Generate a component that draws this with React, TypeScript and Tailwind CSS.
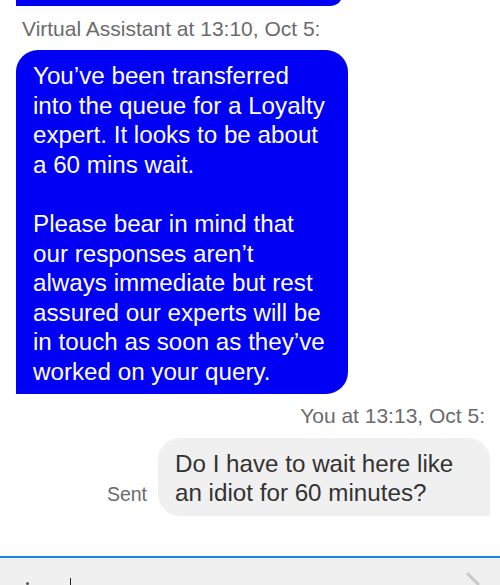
export default function App() {
  return (
    <div className="w-[500px] h-[585px] overflow-hidden bg-white font-['Liberation_Sans',Arial,sans-serif] flex flex-col">
      <div className="flex-1 flex flex-col">
        <div className="ml-4 mt-[-20px] w-[327px] h-[26px] bg-[#0000f5] rounded-[20px] rounded-bl-none" />
        <div className="ml-[22px] mt-[11px] text-[21px] leading-[24px] text-[#6b6b6b]">
          Virtual Assistant at 13:10, Oct 5:
        </div>
        <div className="ml-4 mt-[9px] w-[332px] bg-[#0000f5] text-white text-[24.2px] leading-[29.6px] rounded-[22px] rounded-bl-none pl-[17px] pr-[22px] pt-[11px] pb-[7px]">
          <p>You’ve been transferred into the queue for a Loyalty expert. It looks to be about a 60 mins wait.</p>
          <p className="mt-[29.6px]">
            Please bear in mind that our responses aren’t always immediate but rest assured our experts will be in touch as soon as they’ve worked on your query.
          </p>
        </div>
        <div className="mt-[10px] mr-[15px] text-right text-[21px] leading-[24px] text-[#6b6b6b]">
          You at 13:13, Oct 5:
        </div>
        <div className="mt-[10px] flex items-end justify-end gap-[11px] mr-[10px]">
          <span className="mb-[11px] text-[19.5px] leading-[22px] text-[#6b6b6b]">Sent</span>
          <div className="w-[332px] bg-[#f0f0f0] text-[#333333] text-[24.2px] leading-[29px] rounded-[22px] rounded-br-none pl-[17px] pr-[22px] pt-[11px] pb-[9px]">
            Do I have to wait here like an idiot for 60 minutes?
          </div>
        </div>
      </div>
      <div className="h-[2px] bg-[#1a85ea]" />
      <div className="h-[27px] bg-[#f0f0f0] relative">
        <span className="absolute left-[26px] top-[24px] w-[3px] h-[3px] rounded-full bg-[#555]" />
        <span className="absolute left-[70px] top-[20px] w-[1px] h-[7px] bg-[#222]" />
        <svg className="absolute left-[466px] top-[14px]" width="16" height="14" viewBox="0 0 16 14">
          <path d="M2 2 L12 12" stroke="#c8c8c8" strokeWidth="3" strokeLinecap="round" />
        </svg>
      </div>
    </div>
  );
}
